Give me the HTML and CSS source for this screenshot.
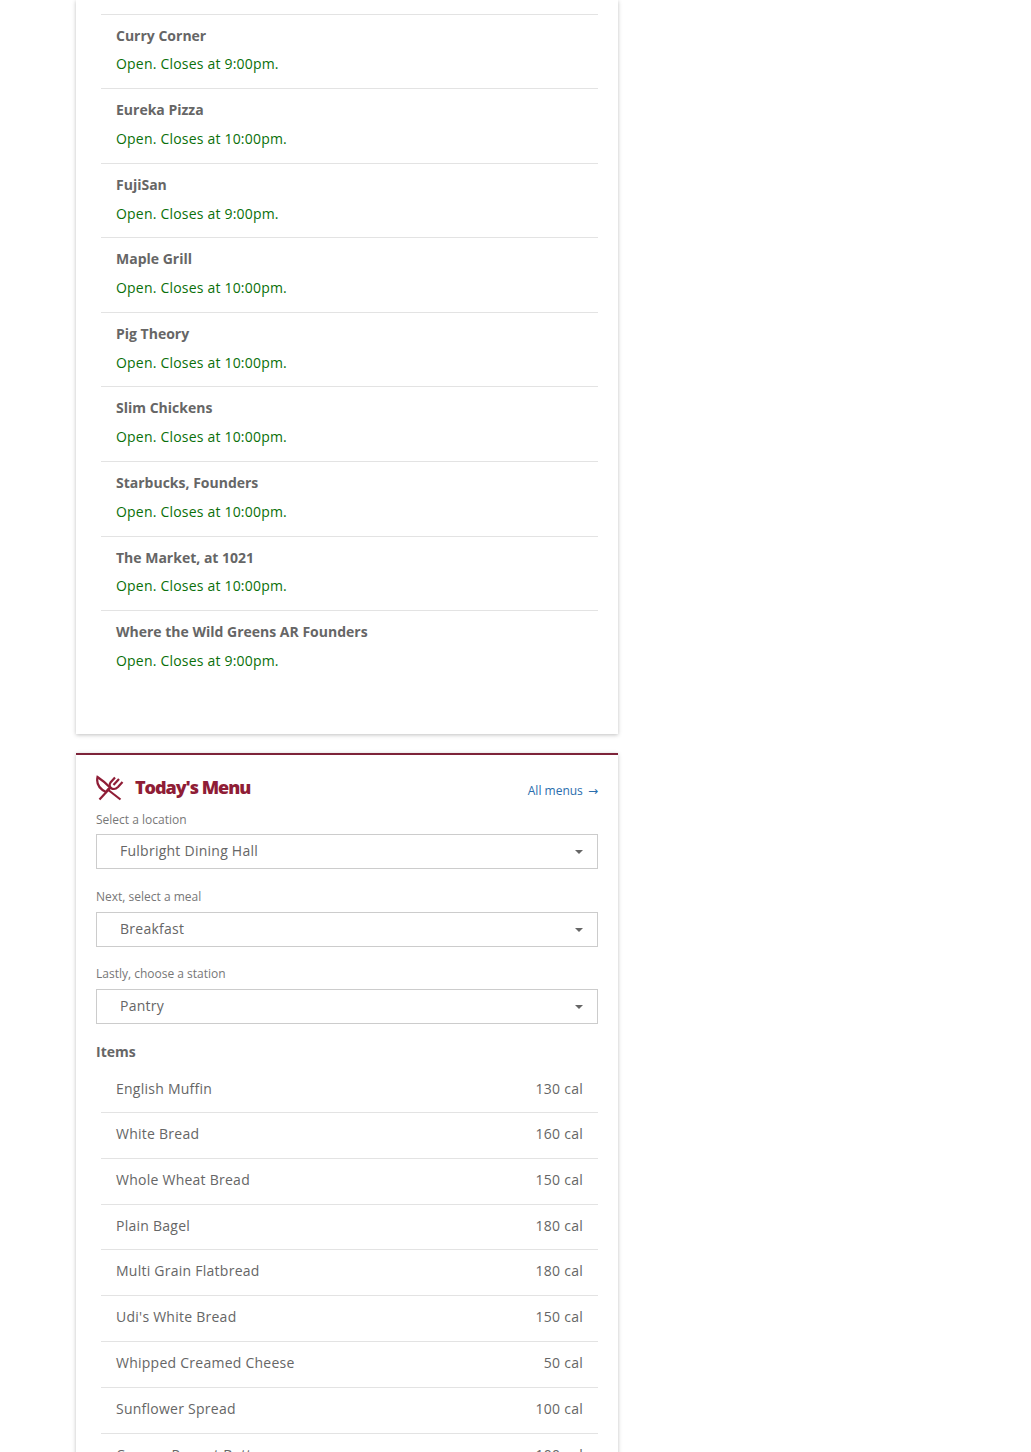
FILE: index.html
```html
<!DOCTYPE html>
<html lang="en">
<head>
  <meta charset="UTF-8">
  <meta name="viewport" content="width=device-width, initial-scale=1">
  <title>Dining</title>
  <link rel="stylesheet" href="styles.css">
</head>
<body>
  <div class="column">
    <section class="card card-hours">
      <ul class="hours">
        <li><strong>Curry Corner</strong><span>Open. Closes at 9:00pm.</span></li>
        <li><strong>Eureka Pizza</strong><span>Open. Closes at 10:00pm.</span></li>
        <li><strong>FujiSan</strong><span>Open. Closes at 9:00pm.</span></li>
        <li><strong>Maple Grill</strong><span>Open. Closes at 10:00pm.</span></li>
        <li><strong>Pig Theory</strong><span>Open. Closes at 10:00pm.</span></li>
        <li><strong>Slim Chickens</strong><span>Open. Closes at 10:00pm.</span></li>
        <li><strong>Starbucks, Founders</strong><span>Open. Closes at 10:00pm.</span></li>
        <li><strong>The Market, at 1021</strong><span>Open. Closes at 10:00pm.</span></li>
        <li><strong>Where the Wild Greens AR Founders</strong><span>Open. Closes at 9:00pm.</span></li>
      </ul>
    </section>

    <section class="card card-menu">
      <header class="menu-head">
        <svg class="menu-icon" viewBox="0 0 28 26" width="28" height="26" fill="none" stroke="#8f1d36" stroke-width="2.2">
          <path d="M1.5 2 C0 9 4 14 10 17 L14 12.5 C10 8 6 5 1.5 2 Z"/>
          <path d="M11 14 L24.5 24.5"/>
          <path d="M19 2.5 L14.5 7.5 C12.5 10 14 14 18 14 C20 14 21 13 22 12 L26.5 7"/>
          <path d="M23 4 L17.5 10"/>
          <path d="M15 12 L3.5 24.5"/>
        </svg>
        <h2>Today's Menu</h2>
        <a class="all-menus" href="#">All menus <span class="arrow">→</span></a>
      </header>

      <label class="field-label">Select a location</label>
      <div class="select">Fulbright Dining Hall</div>
      <label class="field-label">Next, select a meal</label>
      <div class="select">Breakfast</div>
      <label class="field-label">Lastly, choose a station</label>
      <div class="select">Pantry</div>

      <h3>Items</h3>
      <ul class="items">
        <li><span>English Muffin</span><span>130 cal</span></li>
        <li><span>White Bread</span><span>160 cal</span></li>
        <li><span>Whole Wheat Bread</span><span>150 cal</span></li>
        <li><span>Plain Bagel</span><span>180 cal</span></li>
        <li><span>Multi Grain Flatbread</span><span>180 cal</span></li>
        <li><span>Udi's White Bread</span><span>150 cal</span></li>
        <li><span>Whipped Creamed Cheese</span><span>50 cal</span></li>
        <li><span>Sunflower Spread</span><span>100 cal</span></li>
        <li><span>Creamy Peanut Butter</span><span>100 cal</span></li>
      </ul>
    </section>
  </div>
</body>
</html>
```

FILE: styles.css
```css
* {
  margin: 0;
  padding: 0;
  box-sizing: border-box;
}

html, body {
  height: 1452px;
  overflow: hidden;
}

body {
  font-family: 'Open Sans', sans-serif;
  font-size: 14px;
  letter-spacing: 0.25px;
  color: #666;
  background-color: #fff;
}

ul {
  list-style: none;
}

.column {
  width: 542px;
  margin-left: 76px;
}

.card {
  background-color: #fff;
  box-shadow: 0 1px 4px rgba(0, 0, 0, 0.25);
}

.card-hours {
  padding: 13.5px 20px 49.3px 25px;
  margin-bottom: 19px;
}

.hours li {
  height: 74.58px;
  padding: 11px 15px 0;
  border-top: 1px solid #e3e3e3;
}

.hours strong {
  display: block;
  font-weight: 700;
  letter-spacing: 0;
  line-height: 20px;
  margin-bottom: 8.9px;
}

.hours span {
  display: block;
  color: #0a700a;
  letter-spacing: 0.2px;
  line-height: 20px;
}

.card-menu {
  border-top: 2px solid #7d2339;
  padding: 0 20px;
}

.menu-head {
  display: flex;
  align-items: center;
  height: 55.6px;
  padding-top: 12px;
  padding-bottom: 1.6px;
}

.menu-icon {
  margin-right: 11px;
}

.menu-head h2 {
  font-size: 18px;
  font-weight: 800;
  letter-spacing: -1.05px;
  color: #8f1d36;
  margin-top: -2px;
}

.all-menus {
  margin-left: auto;
  font-size: 12px;
  letter-spacing: 0;
  color: #2a6ead;
  text-decoration: none;
  padding-top: 4px;
}

.arrow {
  font-family: 'DejaVu Sans', sans-serif;
  margin-left: 2px;
}

.field-label {
  display: block;
  font-size: 12px;
  letter-spacing: 0;
  line-height: 18px;
  margin-bottom: 5.8px;
  color: #777;
}

.select {
  position: relative;
  height: 35px;
  line-height: 32px;
  padding-left: 23px;
  border: 1px solid #ccc;
  margin-bottom: 18.6px;
}

.select::after {
  content: "";
  position: absolute;
  right: 14px;
  top: 15px;
  border-left: 4px solid transparent;
  border-right: 4px solid transparent;
  border-top: 4px solid #666;
}

.card-menu h3 {
  font-size: 14px;
  font-weight: 700;
  letter-spacing: 0;
  line-height: 20px;
  margin-top: -1px;
  margin-bottom: 6px;
}

.items {
  margin-left: 5px;
}

.items li {
  display: flex;
  justify-content: space-between;
  height: 45.8px;
  padding: 11px 15px 0;
  line-height: 20px;
  border-top: 1px solid #e3e3e3;
}

.items li:first-child {
  height: 44.3px;
  border-top: none;
}
```
